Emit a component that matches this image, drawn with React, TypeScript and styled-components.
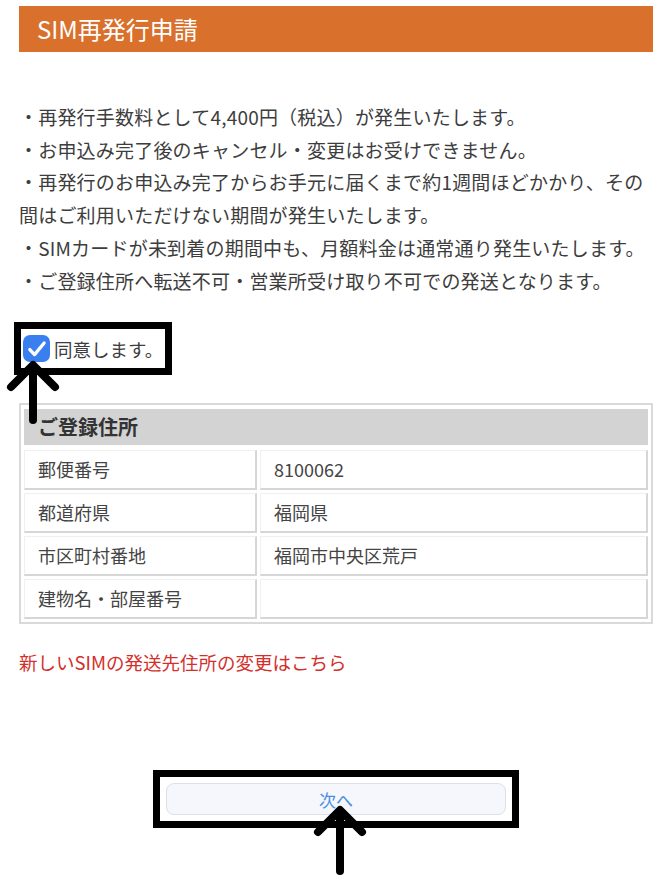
import React from "react";
import styled, { createGlobalStyle } from "styled-components";

const GlobalStyle = createGlobalStyle`
  body {
    margin: 0;
    background: #fff;
    font-family: "Noto Sans CJK JP", "Noto Sans", sans-serif;
  }
`;

const Page = styled.div`
  position: relative;
  width: 666px;
  height: 882px;
  padding: 6px 13px 0 19px;
  box-sizing: border-box;
  overflow: hidden;
`;

const TitleBar = styled.div`
  height: 46px;
  line-height: 46px;
  background: #d9702c;
  color: #fff;
  font-size: 24px;
  padding-left: 18px;
`;

const Notice = styled.div`
  margin-top: 49px;
  font-size: 19px;
  line-height: 32.7px;
  color: #3d3d3d;
  letter-spacing: 0.2px;

  & p {
    margin: 0;
  }
`;

const Highlight = styled.div<{ $pad: string }>`
  display: inline-flex;
  align-items: center;
  border: 7px solid #000;
  padding: ${({ $pad }) => $pad};
  background: #fff;
`;

const AgreeWrap = styled.div`
  display: flex;
  margin-top: 25px;
  margin-left: -5px;
`;

const AgreeLabel = styled.label`
  display: inline-flex;
  align-items: center;
  gap: 4px;
  font-size: 18.5px;
  color: #3d3d3d;
  height: 39px;
`;

const CheckBox = styled.span`
  width: 27px;
  height: 27px;
  border-radius: 7px;
  background: #3a7ff0;
  display: flex;
  align-items: center;
  justify-content: center;
`;

const AddressTable = styled.div`
  margin-top: 28px;
  border: 2px solid #d9d9d9;
  padding: 4px 3px 3px;
  display: grid;
  grid-template-columns: 233px 1fr;
  gap: 3px 3px;
`;

const TableHead = styled.div`
  grid-column: 1 / -1;
  height: 36px;
  line-height: 36px;
  background: #d3d3d3;
  color: #333;
  font-size: 20px;
  font-weight: 700;
  padding-left: 14px;
  margin-bottom: 2px;
`;

const Cell = styled.div`
  height: 37px;
  line-height: 37px;
  border-top: 1px solid #f0f0f0;
  border-left: 1px solid #f0f0f0;
  border-right: 2px solid #d6d6d6;
  border-bottom: 2px solid #d6d6d6;
  padding-left: 13px;
  font-size: 18px;
  color: #444;
`;

const ChangeLink = styled.a`
  display: block;
  margin-top: 26px;
  font-size: 18.5px;
  line-height: 24px;
  color: #d3302c;
  text-decoration: none;
`;

const ButtonWrap = styled.div`
  margin-top: 96px;
  display: flex;
  justify-content: center;
`;

const NextButton = styled.button`
  width: 340px;
  height: 32px;
  background: #f5f7fc;
  border: 1.5px solid #dde0e8;
  border-radius: 8px;
  color: #4a8fe0;
  font-family: inherit;
  font-size: 17px;
  padding: 0;
`;

const ArrowLayer = styled.svg`
  position: absolute;
  left: 0;
  top: 0;
  pointer-events: none;
`;

const rows: [string, string][] = [
  ["郵便番号", "8100062"],
  ["都道府県", "福岡県"],
  ["市区町村番地", "福岡市中央区荒戸"],
  ["建物名・部屋番号", ""],
];

const Arrow = ({ x, top, bottom }: { x: number; top: number; bottom: number }) => (
  <g stroke="#000" strokeWidth={8} strokeLinecap="round" strokeLinejoin="round" fill="none">
    <path d={`M${x} ${top + 2}V${bottom}`} />
    <path d={`M${x - 22} ${top + 22}L${x} ${top}L${x + 22} ${top + 22}`} />
  </g>
);

export default function App() {
  return (
    <>
      <GlobalStyle />
      <Page>
        <TitleBar>SIM再発行申請</TitleBar>
        <Notice>
          <p>・再発行手数料として4,400円（税込）が発生いたします。</p>
          <p>・お申込み完了後のキャンセル・変更はお受けできません。</p>
          <p>・再発行のお申込み完了からお手元に届くまで約1週間ほどかかり、その間はご利用いただけない期間が発生いたします。</p>
          <p>・SIMカードが未到着の期間中も、月額料金は通常通り発生いたします。</p>
          <p>・ご登録住所へ転送不可・営業所受け取り不可での発送となります。</p>
        </Notice>

        <AgreeWrap>
          <Highlight $pad="0 2px">
            <AgreeLabel>
              <CheckBox>
                <svg width="22" height="22" viewBox="0 0 20 20">
                  <path d="M3.5 10.5l4.3 4.6L16.5 4.5" stroke="#fff" strokeWidth="3" fill="none" strokeLinecap="round" strokeLinejoin="round" />
                </svg>
              </CheckBox>
              同意します。
            </AgreeLabel>
          </Highlight>
        </AgreeWrap>

        <AddressTable>
          <TableHead>ご登録住所</TableHead>
          {rows.map(([label, value]) => (
            <React.Fragment key={label}>
              <Cell>{label}</Cell>
              <Cell>{value}</Cell>
            </React.Fragment>
          ))}
        </AddressTable>

        <ChangeLink href="#">新しいSIMの発送先住所の変更はこちら</ChangeLink>

        <ButtonWrap>
          <Highlight $pad="6px">
            <NextButton type="button">次へ</NextButton>
          </Highlight>
        </ButtonWrap>

        <ArrowLayer width="666" height="882">
          <Arrow x={33} top={365} bottom={420} />
          <Arrow x={340} top={810} bottom={871} />
        </ArrowLayer>
      </Page>
    </>
  );
}
